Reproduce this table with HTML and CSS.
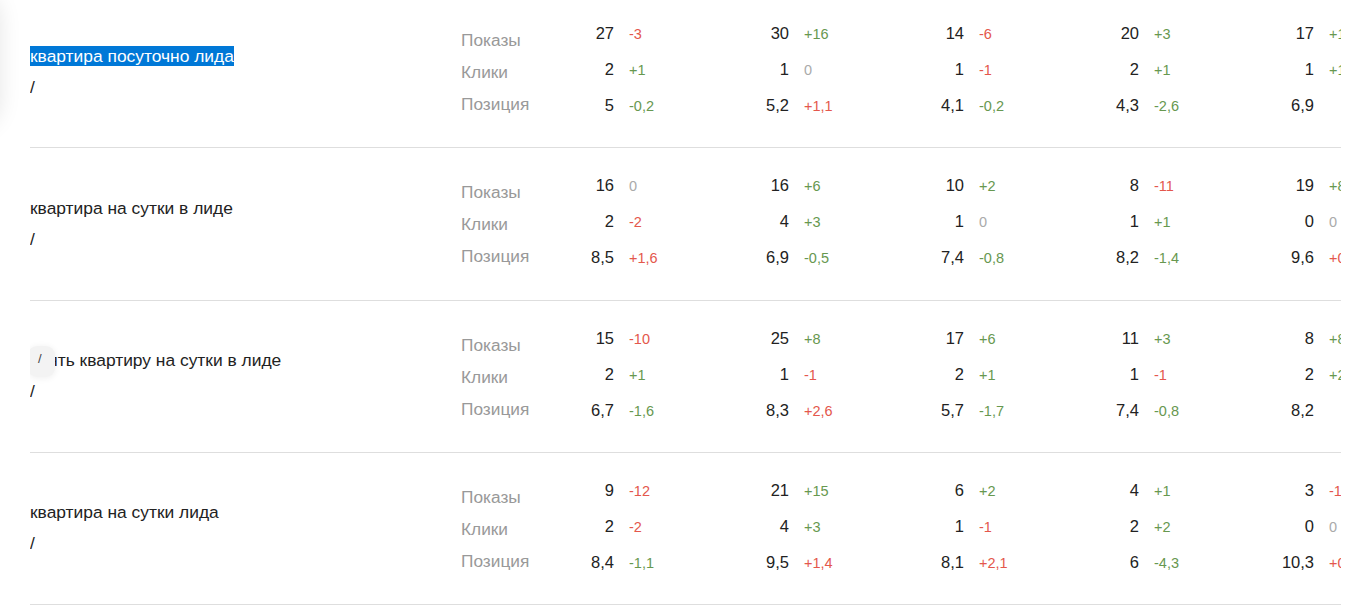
FILE: index.html
```html
<!DOCTYPE html>
<html lang="ru">
<head>
<meta charset="utf-8">
<link rel="stylesheet" href="styles.css">
</head>
<body>
<div class="page">
  <div class="edge-shadow"></div>
  <div class="list">
    <div class="row">
      <div class="query">
        <div class="q-text"><span class="selected">квартира посуточно лида</span></div>
        <div class="q-path">/</div>
      </div>
      <div class="labels"><div>Показы</div><div>Клики</div><div>Позиция</div></div>
      <div class="metric">
        <div class="line"><span class="num">27</span><span class="d red">-3</span></div>
        <div class="line"><span class="num">2</span><span class="d green">+1</span></div>
        <div class="line"><span class="num">5</span><span class="d green">-0,2</span></div>
      </div>
      <div class="metric">
        <div class="line"><span class="num">30</span><span class="d green">+16</span></div>
        <div class="line"><span class="num">1</span><span class="d zero">0</span></div>
        <div class="line"><span class="num">5,2</span><span class="d red">+1,1</span></div>
      </div>
      <div class="metric">
        <div class="line"><span class="num">14</span><span class="d red">-6</span></div>
        <div class="line"><span class="num">1</span><span class="d red">-1</span></div>
        <div class="line"><span class="num">4,1</span><span class="d green">-0,2</span></div>
      </div>
      <div class="metric">
        <div class="line"><span class="num">20</span><span class="d green">+3</span></div>
        <div class="line"><span class="num">2</span><span class="d green">+1</span></div>
        <div class="line"><span class="num">4,3</span><span class="d green">-2,6</span></div>
      </div>
      <div class="metric">
        <div class="line"><span class="num">17</span><span class="d green">+1</span></div>
        <div class="line"><span class="num">1</span><span class="d green">+1</span></div>
        <div class="line"><span class="num">6,9</span><span class="d"></span></div>
      </div>
    </div>

    <div class="row">
      <div class="query">
        <div class="q-text">квартира на сутки в лиде</div>
        <div class="q-path">/</div>
      </div>
      <div class="labels"><div>Показы</div><div>Клики</div><div>Позиция</div></div>
      <div class="metric">
        <div class="line"><span class="num">16</span><span class="d zero">0</span></div>
        <div class="line"><span class="num">2</span><span class="d red">-2</span></div>
        <div class="line"><span class="num">8,5</span><span class="d red">+1,6</span></div>
      </div>
      <div class="metric">
        <div class="line"><span class="num">16</span><span class="d green">+6</span></div>
        <div class="line"><span class="num">4</span><span class="d green">+3</span></div>
        <div class="line"><span class="num">6,9</span><span class="d green">-0,5</span></div>
      </div>
      <div class="metric">
        <div class="line"><span class="num">10</span><span class="d green">+2</span></div>
        <div class="line"><span class="num">1</span><span class="d zero">0</span></div>
        <div class="line"><span class="num">7,4</span><span class="d green">-0,8</span></div>
      </div>
      <div class="metric">
        <div class="line"><span class="num">8</span><span class="d red">-11</span></div>
        <div class="line"><span class="num">1</span><span class="d green">+1</span></div>
        <div class="line"><span class="num">8,2</span><span class="d green">-1,4</span></div>
      </div>
      <div class="metric">
        <div class="line"><span class="num">19</span><span class="d green">+8</span></div>
        <div class="line"><span class="num">0</span><span class="d zero">0</span></div>
        <div class="line"><span class="num">9,6</span><span class="d red">+0,3</span></div>
      </div>
    </div>

    <div class="row">
      <div class="query">
        <div class="q-text">снять квартиру на сутки в лиде</div>
        <div class="q-path">/</div>
        <div class="badge">/</div>
      </div>
      <div class="labels"><div>Показы</div><div>Клики</div><div>Позиция</div></div>
      <div class="metric">
        <div class="line"><span class="num">15</span><span class="d red">-10</span></div>
        <div class="line"><span class="num">2</span><span class="d green">+1</span></div>
        <div class="line"><span class="num">6,7</span><span class="d green">-1,6</span></div>
      </div>
      <div class="metric">
        <div class="line"><span class="num">25</span><span class="d green">+8</span></div>
        <div class="line"><span class="num">1</span><span class="d red">-1</span></div>
        <div class="line"><span class="num">8,3</span><span class="d red">+2,6</span></div>
      </div>
      <div class="metric">
        <div class="line"><span class="num">17</span><span class="d green">+6</span></div>
        <div class="line"><span class="num">2</span><span class="d green">+1</span></div>
        <div class="line"><span class="num">5,7</span><span class="d green">-1,7</span></div>
      </div>
      <div class="metric">
        <div class="line"><span class="num">11</span><span class="d green">+3</span></div>
        <div class="line"><span class="num">1</span><span class="d red">-1</span></div>
        <div class="line"><span class="num">7,4</span><span class="d green">-0,8</span></div>
      </div>
      <div class="metric">
        <div class="line"><span class="num">8</span><span class="d green">+8</span></div>
        <div class="line"><span class="num">2</span><span class="d green">+2</span></div>
        <div class="line"><span class="num">8,2</span><span class="d"></span></div>
      </div>
    </div>

    <div class="row">
      <div class="query">
        <div class="q-text">квартира на сутки лида</div>
        <div class="q-path">/</div>
      </div>
      <div class="labels"><div>Показы</div><div>Клики</div><div>Позиция</div></div>
      <div class="metric">
        <div class="line"><span class="num">9</span><span class="d red">-12</span></div>
        <div class="line"><span class="num">2</span><span class="d red">-2</span></div>
        <div class="line"><span class="num">8,4</span><span class="d green">-1,1</span></div>
      </div>
      <div class="metric">
        <div class="line"><span class="num">21</span><span class="d green">+15</span></div>
        <div class="line"><span class="num">4</span><span class="d green">+3</span></div>
        <div class="line"><span class="num">9,5</span><span class="d red">+1,4</span></div>
      </div>
      <div class="metric">
        <div class="line"><span class="num">6</span><span class="d green">+2</span></div>
        <div class="line"><span class="num">1</span><span class="d red">-1</span></div>
        <div class="line"><span class="num">8,1</span><span class="d red">+2,1</span></div>
      </div>
      <div class="metric">
        <div class="line"><span class="num">4</span><span class="d green">+1</span></div>
        <div class="line"><span class="num">2</span><span class="d green">+2</span></div>
        <div class="line"><span class="num">6</span><span class="d green">-4,3</span></div>
      </div>
      <div class="metric">
        <div class="line"><span class="num">3</span><span class="d red">-1</span></div>
        <div class="line"><span class="num">0</span><span class="d zero">0</span></div>
        <div class="line"><span class="num">10,3</span><span class="d red">+0,2</span></div>
      </div>
    </div>
  </div>
</div>
</body>
</html>
```

FILE: styles.css
```css
html, body {
  margin: 0;
  padding: 0;
  background: #fff;
}
body {
  font-family: "Liberation Sans", Arial, sans-serif;
  color: #222;
  overflow: hidden;
}
.page {
  position: relative;
  width: 1354px;
  height: 614px;
  overflow: hidden;
}
.edge-shadow {
  position: absolute;
  left: -60px;
  top: -10px;
  width: 60px;
  height: 140px;
  border-radius: 30px;
  box-shadow: 0 0 22px rgba(0, 0, 0, 0.10);
}
.list {
  margin-top: -4px;
  margin-left: 30px;
  width: 1311px;
}
.row {
  display: flex;
  align-items: flex-start;
  height: 151.33px;
  border-bottom: 1px solid #dedede;
  overflow: hidden;
}
.query {
  position: relative;
  width: 431px;
  flex: none;
  height: 151px;
  display: flex;
  flex-direction: column;
  justify-content: center;
  font-size: 17.4px;
  line-height: 31px;
  color: #222;
}
.selected {
  background: #0078d7;
  color: #fff;
}
.badge {
  position: absolute;
  left: -2px;
  top: 45px;
  width: 27px;
  height: 31px;
  box-sizing: border-box;
  padding: 4px 0 0 10px;
  border-radius: 9px;
  background: #f3f3f3;
  box-shadow: 0 1px 7px rgba(0, 0, 0, 0.07);
  font-size: 13px;
  line-height: 18px;
  color: #444;
}
.labels {
  width: 93px;
  flex: none;
  padding-top: 28px;
  font-size: 17.3px;
  line-height: 32px;
  color: #999;
}
.metric {
  width: 175px;
  flex: none;
  padding-top: 19px;
}
.line {
  display: flex;
  align-items: baseline;
  height: 36px;
  line-height: 36px;
}
.num {
  width: 60px;
  text-align: right;
  font-size: 16.5px;
  color: #222;
}
.d {
  margin-left: 15px;
  font-size: 14.5px;
  white-space: nowrap;
}
.red { color: #e4574c; }
.green { color: #67984f; }
.zero { color: #aaa; }
```
